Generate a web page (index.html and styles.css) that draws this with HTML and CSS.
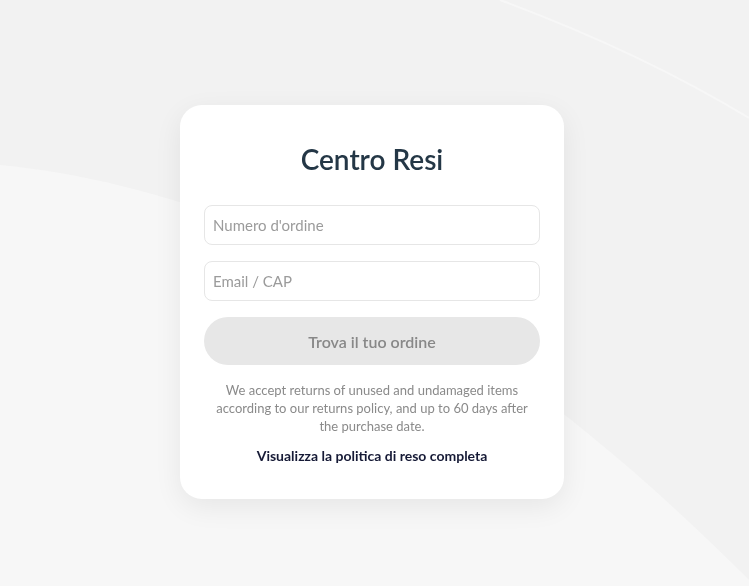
FILE: index.html
```html
<!DOCTYPE html>
<html lang="it">
<head>
    <meta charset="utf-8">
    <title>Centro Resi</title>
    <link rel="stylesheet" href="styles.css">
</head>
<body>
    <!-- decorative background waves -->
    <svg class="bg-waves" viewBox="0 0 749 586" preserveAspectRatio="none" aria-hidden="true">
        <path class="wave-fill" d="M0,165 C200,185 450,280 749,580 L749,586 L0,586 Z"/>
        <path class="wave-line" d="M500,0 Q640,52 749,118"/>
    </svg>

    <div class="page">
        <div class="card">
            <h1 class="card-title">Centro Resi</h1>
            <form class="lookup-form">
                <input type="text" class="field" placeholder="Numero d'ordine">
                <input type="text" class="field" placeholder="Email / CAP">
                <button type="submit" class="find-btn" disabled>Trova il tuo ordine</button>
            </form>
            <p class="policy-text">We accept returns of unused and undamaged items according to our returns policy, and up to 60 days after the purchase date.</p>
            <a href="#" class="policy-link">Visualizza la politica di reso completa</a>
        </div>
    </div>
</body>
</html>
```

FILE: styles.css
```css
* {
    box-sizing: border-box;
}

html, body {
    height: 100%;
}

body {
    margin: 0;
    font-family: Lato, "Open Sans", Arial, sans-serif;
    background-color: #f2f2f2;
    overflow: hidden;
}

.bg-waves {
    position: fixed;
    top: 0;
    left: 0;
    width: 100%;
    height: 100%;
    z-index: 0;
}

.wave-fill {
    fill: #f7f7f7;
}

.wave-line {
    fill: none;
    stroke: #f7f7f7;
    stroke-width: 2;
}

.page {
    position: relative;
    z-index: 1;
    display: flex;
    justify-content: center;
    padding: 105px 5px 0 0;
}

.card {
    width: 384px;
    padding: 36px 24px 33px;
    background-color: #fff;
    border-radius: 22px;
    box-shadow: 0 8px 28px rgba(0, 0, 0, 0.07);
    text-align: center;
}

.card-title {
    margin: 0 0 28px;
    font-size: 28px;
    font-weight: 600;
    line-height: 36px;
    color: #243746;
}

.lookup-form {
    display: flex;
    flex-direction: column;
    gap: 16px;
}

.field {
    width: 100%;
    height: 40px;
    padding: 0 8px;
    border: 1px solid #e6e6e6;
    border-radius: 8px;
    font-family: inherit;
    font-size: 15px;
    color: #333;
    outline: none;
}

.field::placeholder {
    color: #9b9b9b;
}

.find-btn {
    height: 48px;
    border: none;
    border-radius: 24px;
    background-color: #e7e7e7;
    font-family: inherit;
    font-size: 16px;
    font-weight: 600;
    color: #888;
}

.policy-text {
    margin: 16px 0 10px;
    padding: 0 8px;
    font-size: 13px;
    line-height: 18px;
    color: #8a8a8a;
}

.policy-link {
    display: inline-block;
    font-size: 14px;
    font-weight: 700;
    line-height: 20px;
    color: #161a36;
    text-decoration: none;
}
```
